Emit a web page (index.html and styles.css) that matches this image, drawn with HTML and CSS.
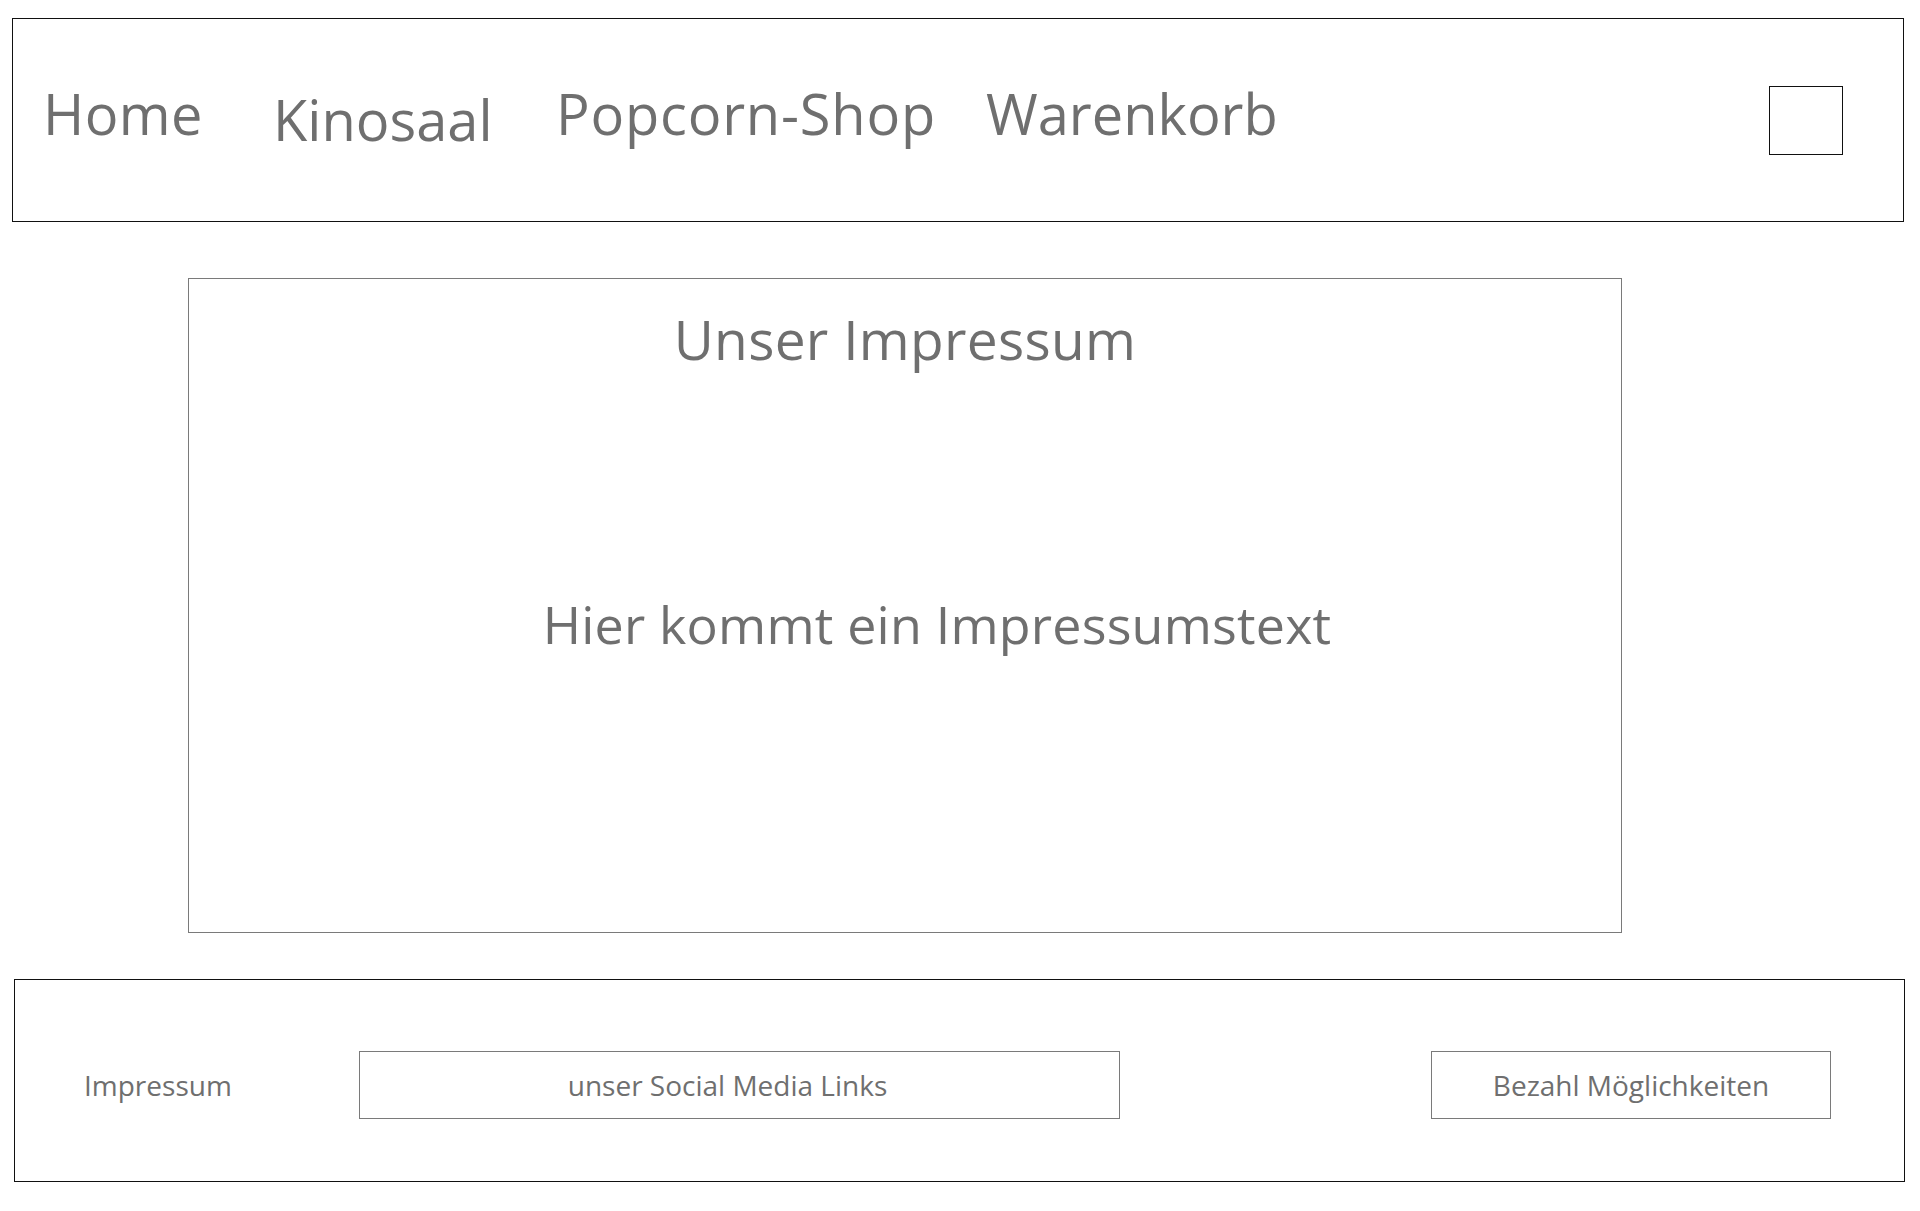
FILE: index.html
```html
<!DOCTYPE html>
<html lang="de">
<head>
<meta charset="utf-8">
<title>Unser Impressum</title>
<link rel="stylesheet" href="styles.css">
</head>
<body>
  <header class="topbar">
    <nav class="nav">
      <a class="nav-item nav-home" href="#">Home</a>
      <a class="nav-item nav-kino" href="#">Kinosaal</a>
      <a class="nav-item nav-shop" href="#">Popcorn-Shop</a>
      <a class="nav-item nav-cart" href="#">Warenkorb</a>
    </nav>
    <div class="cart-box"></div>
  </header>

  <main class="content">
    <h1 class="content-title">Unser Impressum</h1>
    <p class="content-text">Hier kommt ein Impressumstext</p>
  </main>

  <footer class="footer">
    <div class="foot-label">Impressum</div>
    <div class="foot-box foot-social">unser Social Media Links</div>
    <div class="foot-box foot-pay">Bezahl Möglichkeiten</div>
  </footer>
</body>
</html>
```
FILE: styles.css
```css
* {
  box-sizing: border-box;
}

html, body {
  margin: 0;
  padding: 0;
  background: #ffffff;
}

body {
  font-family: "Open Sans", "Noto Sans", "Liberation Sans", sans-serif;
  color: #6f6f6f;
  width: 1920px;
}

/* ---------- Header ---------- */
.topbar {
  margin: 18px 16px 0 12px;
  height: 204px;
  border: 1px solid #111111;
  display: flex;
  align-items: flex-start;
  padding-left: 30px;
}

.nav {
  display: flex;
  align-items: flex-start;
}

.nav-item {
  display: block;
  font-size: 56px;
  line-height: 1;
  color: #6f6f6f;
  text-decoration: none;
  margin-top: 66px;
  white-space: nowrap;
}

.nav-home { width: 230px; letter-spacing: 0.4px; }
.nav-kino { width: 283px; margin-top: 72px; }
.nav-shop { width: 430px; letter-spacing: 0.8px; }

.cart-box {
  margin-left: auto;
  margin-right: 60px;
  margin-top: 67px;
  width: 74px;
  height: 69px;
  border: 1px solid #111111;
}

/* ---------- Main content ---------- */
.content {
  margin: 56px 0 0 188px;
  width: 1434px;
  height: 655px;
  border: 1px solid #7a7a7a;
  display: flex;
  flex-direction: column;
  align-items: center;
}

.content-title {
  margin: 32px 0 0 0;
  font-size: 55px;
  line-height: 1;
  font-weight: 400;
  color: #6f6f6f;
  letter-spacing: 0.3px;
}

.content-text {
  margin: 232px 0 0 0;
  padding-left: 64px;
  font-size: 52px;
  line-height: 1;
  color: #6f6f6f;
  letter-spacing: 0.2px;
}

/* ---------- Footer ---------- */
.footer {
  margin: 46px 15px 0 14px;
  height: 203px;
  border: 1px solid #111111;
  display: flex;
  align-items: flex-start;
  padding: 71px 73px 0 69px;
}

.foot-label {
  width: 275px;
  height: 68px;
  line-height: 68px;
  font-size: 28px;
}

.foot-box {
  height: 68px;
  border: 1px solid #7a7a7a;
  line-height: 66px;
  font-size: 28px;
  text-align: center;
}

.foot-social {
  width: 761px;
  padding-right: 24px;
}

.foot-pay {
  width: 400px;
  margin-left: auto;
}
```
